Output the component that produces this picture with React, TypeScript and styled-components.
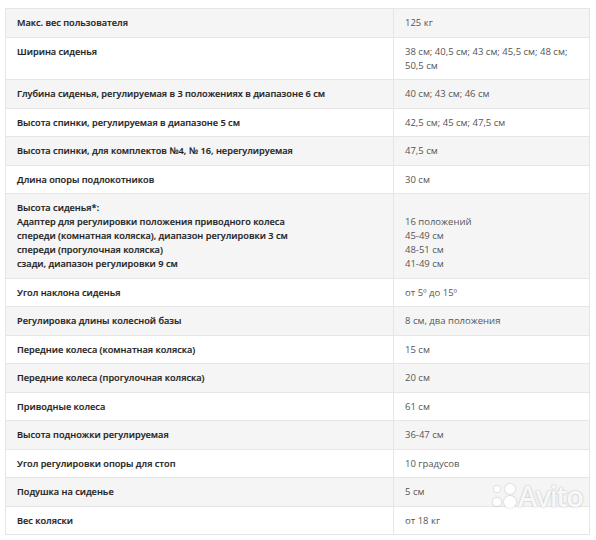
import styled, { createGlobalStyle } from "styled-components";

type Spec = { name: string[]; value: string[] };

const specs: Spec[] = [
  { name: ["Макс. вес пользователя"], value: ["125 кг"] },
  { name: ["Ширина сиденья"], value: ["38 см; 40,5 см; 43 см; 45,5 см; 48 см; 50,5 см"] },
  { name: ["Глубина сиденья, регулируемая в 3 положениях в диапазоне 6 см"], value: ["40 см; 43 см; 46 см"] },
  { name: ["Высота спинки, регулируемая в диапазоне 5 см"], value: ["42,5 см; 45 см; 47,5 см"] },
  { name: ["Высота спинки, для комплектов №4, № 16, нерегулируемая"], value: ["47,5 см"] },
  { name: ["Длина опоры подлокотников"], value: ["30 см"] },
  {
    name: [
      "Высота сиденья*:",
      "Адаптер для регулировки положения приводного колеса",
      "спереди (комнатная коляска), диапазон регулировки 3 см",
      "спереди (прогулочная коляска)",
      "сзади, диапазон регулировки 9 см",
    ],
    value: ["\u00a0", "16 положений", "45-49 см", "48-51 см", "41-49 см"],
  },
  { name: ["Угол наклона сиденья"], value: ["от 5º до 15º"] },
  { name: ["Регулировка длины колесной базы"], value: ["8 см, два положения"] },
  { name: ["Передние колеса (комнатная коляска)"], value: ["15 см"] },
  { name: ["Передние колеса (прогулочная коляска)"], value: ["20 см"] },
  { name: ["Приводные колеса"], value: ["61 см"] },
  { name: ["Высота подножки регулируемая"], value: ["36-47 см"] },
  { name: ["Угол регулировки опоры для стоп"], value: ["10 градусов"] },
  { name: ["Подушка на сиденье"], value: ["5 см"] },
  { name: ["Вес коляски"], value: ["от 18 кг"] },
];

export default function App() {
  return (
    <>
      <GlobalStyle />
      <Page>
        <Table>
          <tbody>
            {specs.map((spec, i) => (
              <Row key={i} $shaded={i % 2 === 0}>
                <NameCell>
                  {spec.name.map((line, j) => (
                    <Line key={j}>{line}</Line>
                  ))}
                </NameCell>
                <ValueCell>
                  {spec.value.map((line, j) => (
                    <Line key={j}>{line}</Line>
                  ))}
                </ValueCell>
              </Row>
            ))}
          </tbody>
        </Table>
        <Watermark aria-hidden="true">
          <Dots>
            <Dot $size={6} />
            <Dot $size={10} />
            <Dot $size={8} />
            <Dot $size={12} />
          </Dots>
          <span>Avito</span>
        </Watermark>
      </Page>
    </>
  );
}

const GlobalStyle = createGlobalStyle`
  body {
    margin: 0;
    background: #fff;
    font-family: "Open Sans", "Noto Sans", sans-serif;
  }
`;

const Page = styled.div`
  position: relative;
  width: 596px;
  height: 540px;
  padding: 8px 7px 0 5px;
  box-sizing: border-box;
  overflow: hidden;
`;

const Table = styled.table`
  width: 585px;
  border-collapse: collapse;
  table-layout: fixed;
  font-size: 9.5px;
  line-height: 14px;
`;

const Row = styled.tr<{ $shaded: boolean }>`
  background: ${({ $shaded }) => ($shaded ? "#f5f5f5" : "#fff")};
`;

const Cell = styled.td`
  border: 1px solid #e6e6e6;
  padding: 7px 11px 6.5px;
  vertical-align: top;
`;

const NameCell = styled(Cell)`
  width: 365px;
  font-size: 9.2px;
  font-weight: 600;
  color: #222;
  -webkit-text-stroke: 0.15px #222;
`;

const ValueCell = styled(Cell)`
  padding-right: 18px;
  color: #555;
`;

const Line = styled.div`
  white-space: pre-wrap;
`;

const Watermark = styled.div`
  position: absolute;
  left: 490px;
  top: 481px;
  display: flex;
  align-items: center;
  gap: 2px;
  font-family: "Open Sans", sans-serif;
  font-size: 29px;
  line-height: 1;
  font-weight: 600;
  letter-spacing: -1.5px;
  color: rgba(255, 255, 255, 0.92);
  text-shadow: 0 0 2px rgba(0, 0, 0, 0.3);
`;

const Dots = styled.div`
  display: grid;
  grid-template-columns: repeat(2, 13px);
  grid-template-rows: repeat(2, 13px);
  place-items: center;
`;

const Dot = styled.span<{ $size: number }>`
  width: ${({ $size }) => $size}px;
  height: ${({ $size }) => $size}px;
  border-radius: 50%;
  background: rgba(255, 255, 255, 0.92);
  box-shadow: 0 0 2px rgba(0, 0, 0, 0.3);
`;
